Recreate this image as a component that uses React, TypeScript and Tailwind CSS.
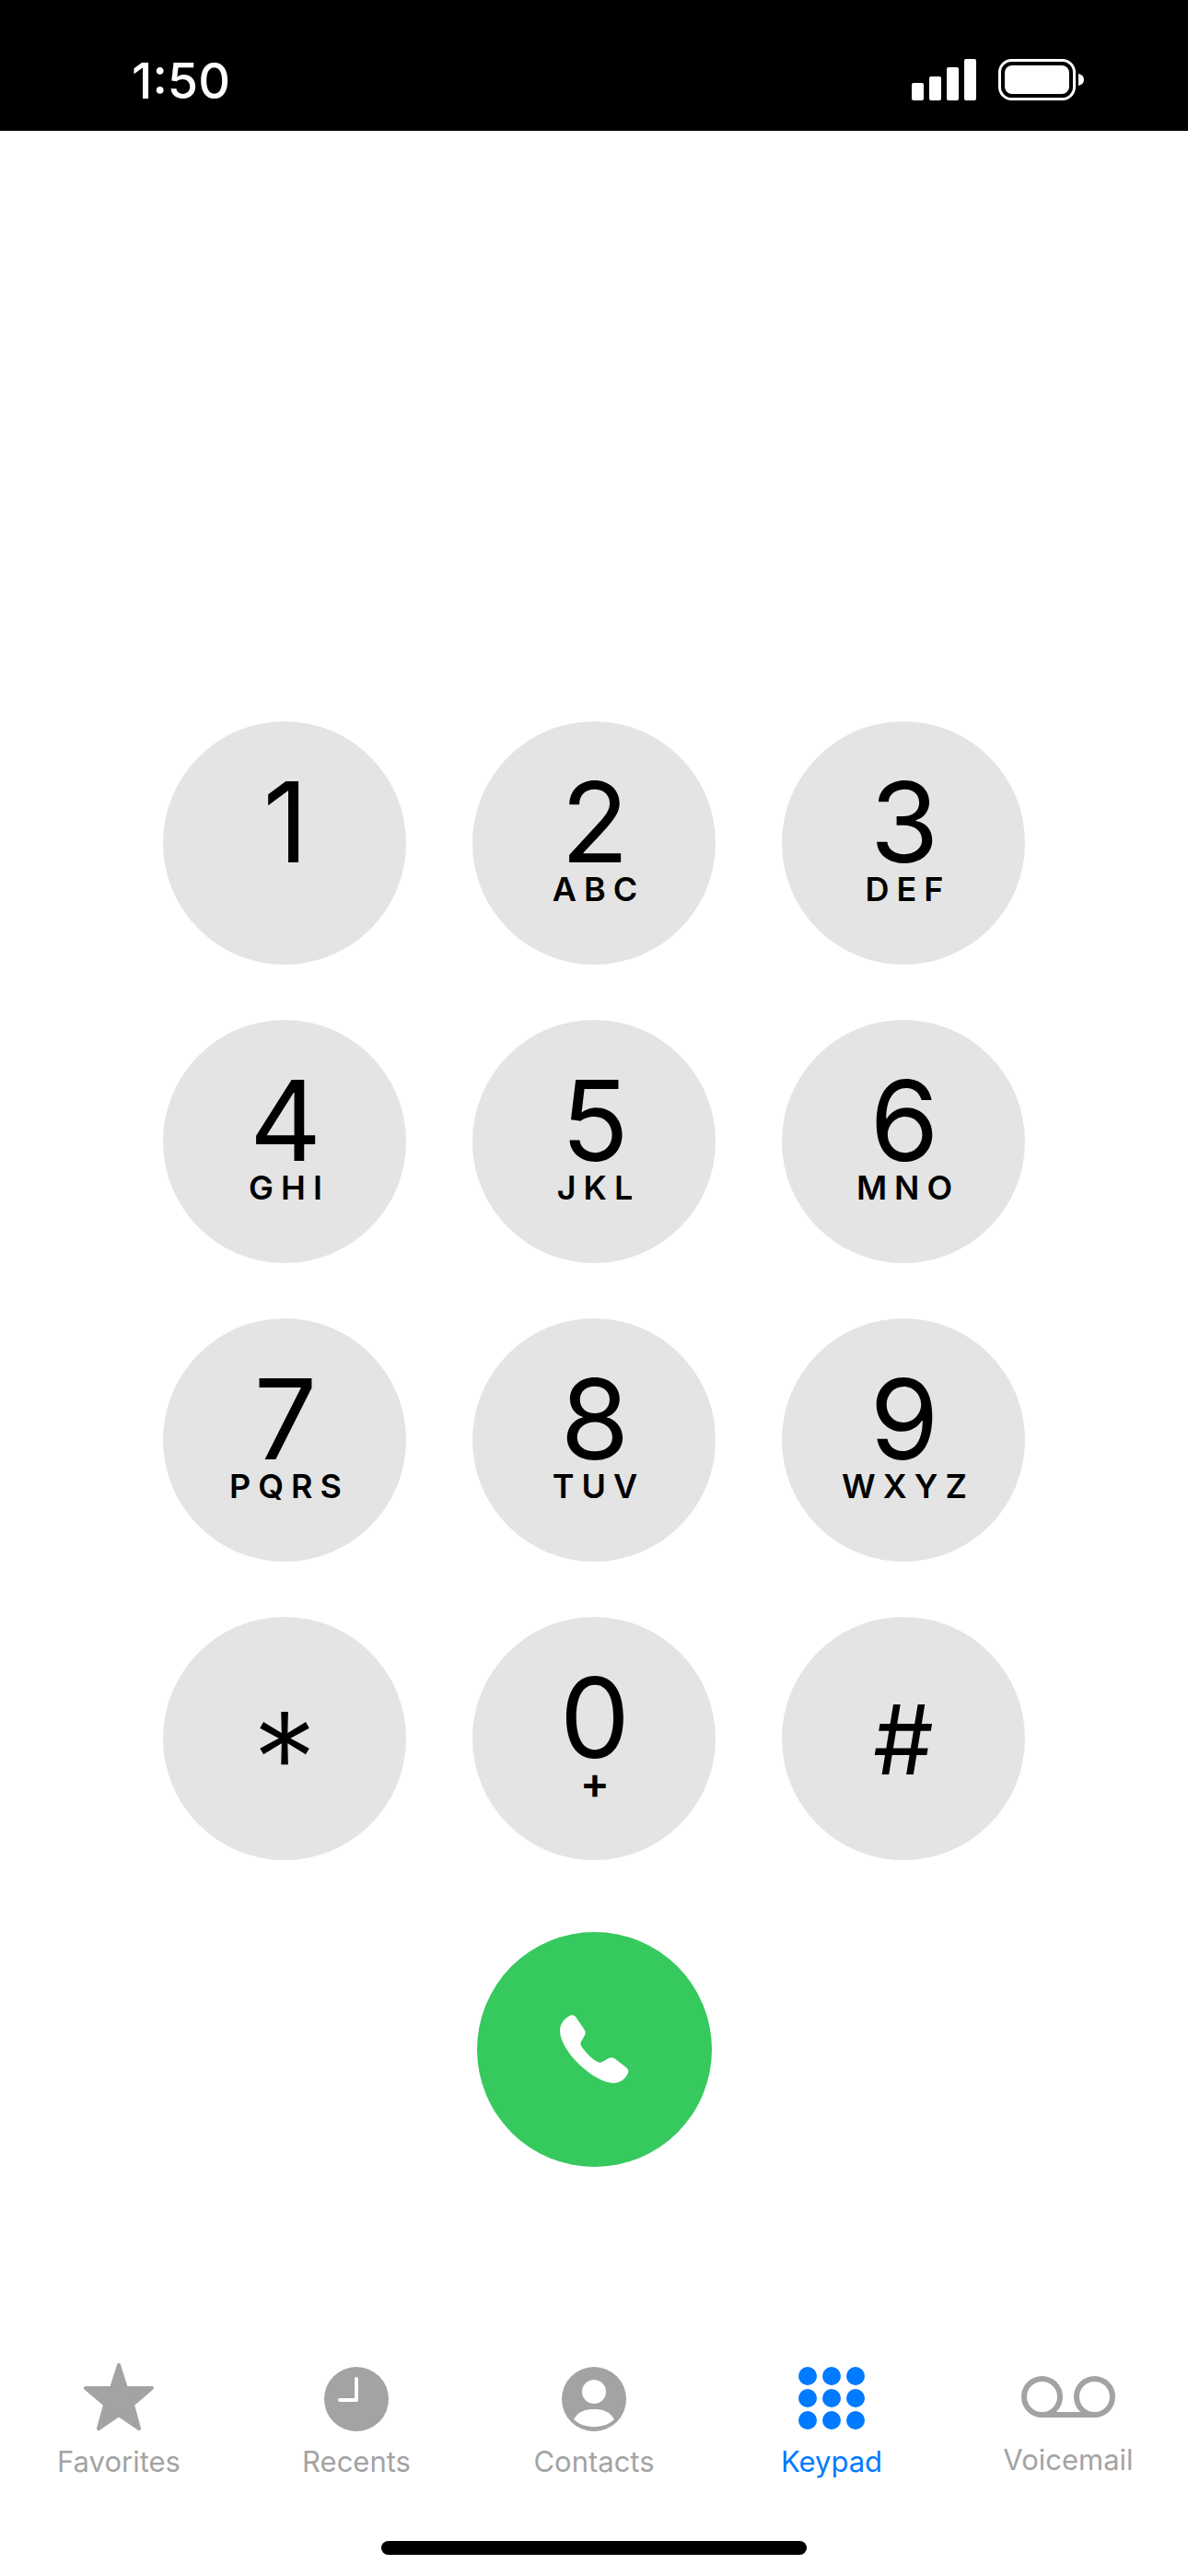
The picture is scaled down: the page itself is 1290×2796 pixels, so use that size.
const KEYS = [
  { digit: '1', letters: '' },
  { digit: '2', letters: 'ABC' },
  { digit: '3', letters: 'DEF' },
  { digit: '4', letters: 'GHI' },
  { digit: '5', letters: 'JKL' },
  { digit: '6', letters: 'MNO' },
  { digit: '7', letters: 'PQRS' },
  { digit: '8', letters: 'TUV' },
  { digit: '9', letters: 'WXYZ' },
  { digit: '*', letters: '' },
  { digit: '0', letters: '+' },
  { digit: '#', letters: '' },
]

function StatusBar() {
  return (
    <div className="flex h-[142px] items-start justify-between bg-black pt-[60px] pl-[143px] pr-[110px] text-white">
      <span className="text-[54px] leading-[56px] font-medium">1:50</span>
      <svg width="190" height="46" viewBox="0 0 190 46" className="mt-[4px]" fill="white">
        <rect x="0" y="26" width="13" height="19" rx="2" />
        <rect x="19" y="19" width="13" height="26" rx="2" />
        <rect x="38" y="9" width="13" height="36" rx="2" />
        <rect x="57" y="0" width="13" height="45" rx="2" />
        <rect x="95.5" y="1.5" width="81" height="42" rx="13" fill="none" stroke="white" strokeWidth="3" />
        <rect x="101" y="7" width="70" height="31" rx="8" />
        <path d="M181 16c4 1 6 3 6 6.500s-2 5.500-6 6.500z" />
      </svg>
    </div>
  )
}

function Key({ digit, letters }: { digit: string; letters: string }) {
  if (digit === '*') {
    return (
      <div className="flex h-[264px] w-[264px] flex-col items-center rounded-full bg-[#e4e4e4] text-black">
        <span className="mt-[99px] text-[140px] leading-[110px] font-light">*</span>
      </div>
    )
  }
  if (digit === '#') {
    return (
      <div className="flex h-[264px] w-[264px] flex-col items-center rounded-full bg-[#e4e4e4] text-black">
        <span className="mt-[78px] text-[104px] leading-[110px]">#</span>
      </div>
    )
  }
  return (
    <div className="flex h-[264px] w-[264px] flex-col items-center rounded-full bg-[#e4e4e4] text-black">
      <span className="mt-[54px] pl-[2px] text-[121px] leading-[110px]">{digit}</span>
      {letters === '+' ? (
        <span className="mt-[-4px] pl-[2px] text-[48px] leading-[40px] font-semibold">+</span>
      ) : (
        letters && <span className="mt-[-2px] pl-[10px] text-[36px] leading-[40px] font-semibold tracking-[8px]">{letters}</span>
      )}
    </div>
  )
}

function TabLabel({ label, active }: { label: string; active?: boolean }) {
  return <span className={active ? 'text-[31px] leading-[36px] text-[#007aff]' : 'text-[31px] leading-[36px] text-[#a3a3a3]'}>{label}</span>
}

export default function App() {
  return (
    <div className="flex h-[2796px] w-[1290px] flex-col bg-white" style={{ fontFamily: 'Inter, sans-serif' }}>
      <StatusBar />
      <div className="mt-[641px] grid grid-cols-[264px_264px_264px] justify-center gap-x-[72px] gap-y-[60px]">
        {KEYS.map((k) => (
          <Key key={k.digit} digit={k.digit} letters={k.letters} />
        ))}
      </div>
      <div className="mt-[78px] flex justify-center">
        <div className="flex h-[255px] w-[255px] items-center justify-center rounded-full bg-[#36c95e]">
          <svg width="75" height="75" viewBox="0 0 75 75" fill="white">
            <path d="M13 0C15 0 16 1 17 2L26 15C28 18 28 20 27 22L23 29C22 31 22 32 24 35C29 42 35 48 41 51C43 52 44 52 46 51L53 47C55 46 57 46 59 47L72 57C74 59 75 61 74 63C71 70 65 74 58 74C38 74 0 40 0 17C0 9 6 2 13 0Z" />
          </svg>
        </div>
      </div>
      <div className="mt-[213px] grid grid-cols-5">
        <div className="flex flex-col items-center gap-[13px]">
          <svg width="76" height="76" viewBox="0 0 76 76" fill="#a3a3a3" stroke="#a3a3a3" strokeWidth="4" strokeLinejoin="round">
            <path d="M38 2L46 27H74L53 45L60 71L38 56L16 71L23 45L2 27H30Z" />
          </svg>
          <TabLabel label="Favorites" />
        </div>
        <div className="flex flex-col items-center gap-[13px]">
          <svg width="70" height="76" viewBox="0 0 70 76" fill="#a3a3a3">
            <circle cx="35" cy="39" r="35" />
            <path d="M35 17v23H17" fill="none" stroke="white" strokeWidth="4" strokeLinecap="round" strokeLinejoin="round" />
          </svg>
          <TabLabel label="Recents" />
        </div>
        <div className="flex flex-col items-center gap-[13px]">
          <svg width="70" height="76" viewBox="0 0 70 76">
            <circle cx="35" cy="39" r="35" fill="#a3a3a3" />
            <circle cx="35" cy="31" r="13" fill="white" />
            <path d="M13 61c5-9 13-11 22-11s17 2 22 11c-6 6-14 8-22 8s-16-2-22-8z" fill="white" />
          </svg>
          <TabLabel label="Contacts" />
        </div>
        <div className="flex flex-col items-center gap-[13px]">
          <svg width="72" height="76" viewBox="0 0 72 76" fill="#007aff">
            {[14, 38, 62].flatMap((cy) => [10, 36, 62].map((cx) => <circle key={`${cx}-${cy}`} cx={cx} cy={cy} r="10" />))}
          </svg>
          <TabLabel label="Keypad" active />
        </div>
        <div className="flex flex-col items-center gap-[11px] pr-[2px]">
          <svg width="102" height="76" viewBox="0 0 102 76" fill="none" stroke="#a3a3a3" strokeWidth="6">
            <circle cx="22.500" cy="36.500" r="19.500" />
            <circle cx="79.500" cy="36.500" r="19.500" />
            <path d="M22 56h58" />
          </svg>
          <TabLabel label="Voicemail" />
        </div>
      </div>
      <div className="mt-[68px] flex justify-center">
        <div className="h-[15px] w-[462px] rounded-full bg-black" />
      </div>
    </div>
  )
}
